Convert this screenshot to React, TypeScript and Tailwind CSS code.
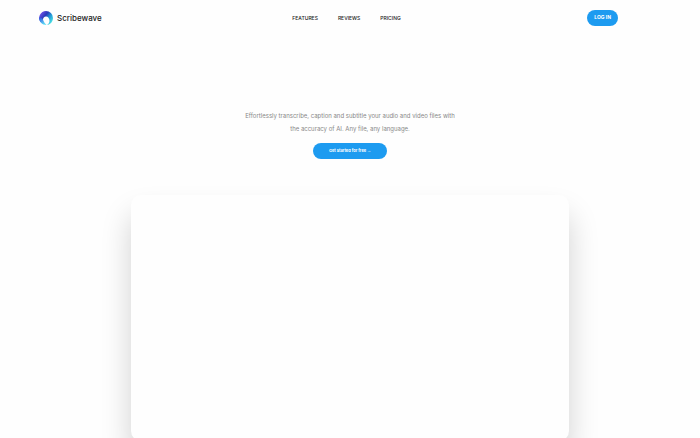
import React from 'react';

const NAV_LINKS = [
  { label: 'Features', href: '#features' },
  { label: 'Reviews', href: '#reviews' },
  { label: 'Pricing', href: '#pricing' },
];

function Logo() {
  return (
    <svg viewBox="0 0 28 28" className="size-[14px]" aria-hidden="true">
      <defs>
        <linearGradient id="ring" x1="0.1" y1="0.2" x2="0.9" y2="0.8">
          <stop offset="0" stopColor="#6a4fe4" />
          <stop offset="0.35" stopColor="#2a38b8" />
          <stop offset="0.65" stopColor="#2498d6" />
          <stop offset="1" stopColor="#4ae0e4" />
        </linearGradient>
        <linearGradient id="tail" x1="0" y1="0" x2="0.6" y2="1">
          <stop offset="0" stopColor="#2f4fe0" />
          <stop offset="1" stopColor="#5fe0f5" />
        </linearGradient>
      </defs>
      <path
        d="M14 0a14 14 0 0 1 14 14c0 7-5 13-12 14 3-2 5-5 5-8 0-5-3-9-7-9s-6 3-6 6c0 2 0 3 1 4L3 22A14 14 0 0 1 14 0Z"
        fill="url(#ring)"
      />
      <path d="M0 13c3 0 6 1 8 4 1 4 3 7 7 11C6 28 0 21 0 13Z" fill="url(#tail)" />
    </svg>
  );
}

export default function App() {
  return (
    <div className="h-screen overflow-hidden bg-[#fefefe] font-['Inter',sans-serif]">
      <header className="grid grid-cols-[1fr_auto_1fr] items-center pt-[10px] pr-[82px] pl-[39px]">
        <a href="#home" className="flex items-center gap-1 justify-self-start">
          <Logo />
          <span className="text-[8px] leading-4 font-medium text-[#222]">Scribewave</span>
        </a>
        <nav className="flex gap-5 pl-[36px]">
          {NAV_LINKS.map((link) => (
            <a key={link.label} href={link.href} className="text-[5px] leading-4 font-medium text-[#222] uppercase">
              {link.label}
            </a>
          ))}
        </nav>
        <button className="h-4 justify-self-end rounded-full bg-[#1d9bf0] px-[7px] text-[5px] font-bold text-white">
          LOG IN
        </button>
      </header>

      <main className="flex flex-col items-center pt-[83px]">
        <p className="max-w-[220px] text-center text-[6px] leading-[13px] text-[#888]">
          Effortlessly transcribe, caption and subtitle your audio and video files with the accuracy of AI. Any file,
          any language.
        </p>
        <button className="mt-2 h-4 rounded-full bg-[#1d9bf0] px-4 text-[4px] font-bold text-white">
          Get started for free <span className="font-['Liberation_Sans',sans-serif]">→</span>
        </button>

        {/* Product video frame */}
        <div className="mt-9 aspect-video w-5/8 rounded-[10px] bg-[#fefefe] shadow-[0_20px_30px_rgba(0,0,0,0.18)]" />
      </main>
    </div>
  );
}
